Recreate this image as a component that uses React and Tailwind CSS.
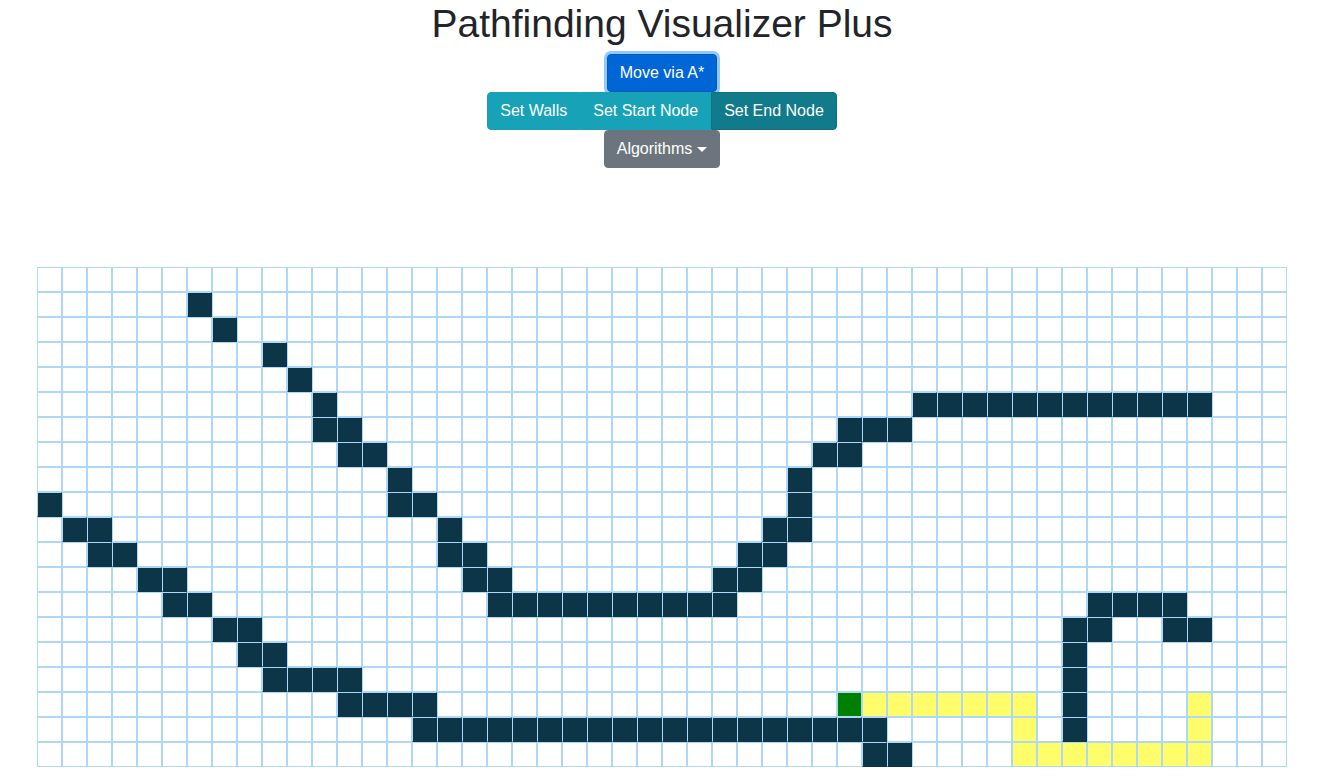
import React from 'react';

const ROWS = 20;
const COLS = 50;

const range = (a, b) => Array.from({ length: b - a + 1 }, (_, i) => a + i);

// walls per row, read off the board
const WALLS = [
  [],
  [6],
  [7],
  [9],
  [10],
  [11, ...range(35, 46)],
  [11, 12, 32, 33, 34],
  [12, 13, 31, 32],
  [14, 30],
  [0, 14, 15, 30],
  [1, 2, 16, 29, 30],
  [2, 3, 16, 17, 28, 29],
  [4, 5, 17, 18, 27, 28],
  [5, 6, ...range(18, 27), ...range(42, 45)],
  [7, 8, 41, 42, 45, 46],
  [8, 9, 41],
  [...range(9, 12), 41],
  [...range(12, 15), 41],
  [...range(15, 33), 41],
  [33, 34],
];

const PATH = {
  17: [...range(33, 39), 46],
  18: [39, 46],
  19: range(39, 46),
};

const START = [17, 32];

function Cell({ type }) {
  if (type === 'wall') {
    return <div className="w-[25px] h-[25px] bg-[#0c3547] border border-[#afd8f8] border-r-[#0c3547] border-b-[#0c3547]"></div>;
  }
  if (type === 'path') {
    return <div className="w-[25px] h-[25px] bg-[#fffe6a] border border-[#afd8f8]"></div>;
  }
  if (type === 'start') {
    return <div className="w-[25px] h-[25px] bg-[#008000] border border-[#afd8f8]"></div>;
  }
  return <div className="w-[25px] h-[25px] bg-white border border-[#afd8f8]"></div>;
}

function Grid() {
  const rows = [];
  for (let r = 0; r < ROWS; r++) {
    const cells = [];
    for (let c = 0; c < COLS; c++) {
      let type = 'empty';
      if (WALLS[r].includes(c)) type = 'wall';
      else if (PATH[r] && PATH[r].includes(c)) type = 'path';
      else if (r === START[0] && c === START[1]) type = 'start';
      cells.push(<Cell key={c} type={type} />);
    }
    rows.push(
      <div key={r} className="flex">
        {cells}
      </div>
    );
  }
  return <div className="flex flex-col">{rows}</div>;
}

export default function App() {
  return (
    <div
      className="min-h-screen bg-white flex flex-col items-center pl-[5px] text-[#212529]"
      style={{ fontFamily: '"Liberation Sans", Arial, sans-serif' }}
    >
      <h1 className="text-[39px] font-medium leading-[48px] mb-[6px]">Pathfinding Visualizer Plus</h1>

      <button className="h-[38px] px-3 rounded-[4px] bg-[#0066d6] border border-[#005cbf] text-white text-base shadow-[0_0_0_3px_rgba(38,143,255,0.5)]">
        Move via A*
      </button>

      <div className="flex">
        <button className="h-[38px] px-3 rounded-l-[4px] bg-[#17a2b8] border border-[#17a2b8] text-white text-base">
          Set Walls
        </button>
        <button className="h-[38px] px-3 bg-[#17a2b8] border border-[#17a2b8] text-white text-base">
          Set Start Node
        </button>
        <button className="h-[38px] px-3 rounded-r-[4px] bg-[#117a8b] border border-[#10707f] text-white text-base">
          Set End Node
        </button>
      </div>

      <button className="h-[38px] px-3 rounded-[4px] bg-[#6c757d] border border-[#6c757d] text-white text-base flex items-center">
        Algorithms
        <span className="ml-[5px] w-0 h-0 border-l-[5px] border-r-[5px] border-t-[5px] border-l-transparent border-r-transparent border-t-white"></span>
      </button>

      <div className="mt-[99px]">
        <Grid />
      </div>
    </div>
  );
}
